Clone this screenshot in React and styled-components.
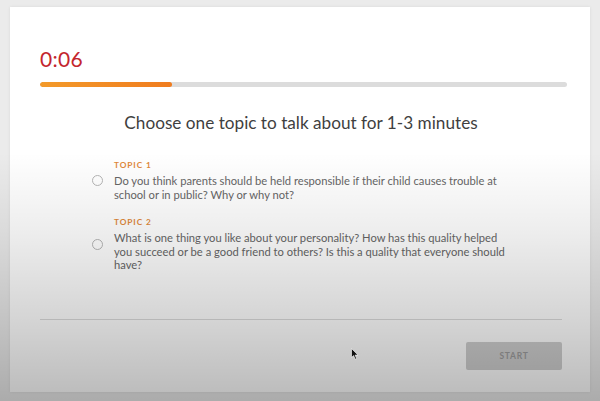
import React from "react";
import styled, { createGlobalStyle } from "styled-components";

const Global = createGlobalStyle`
  html, body { margin: 0; padding: 0; }
  body {
    width: 600px; height: 401px; overflow: hidden;
    background: #ebebeb;
    font-family: Lato, "Open Sans", sans-serif;
  }
`;

const Stage = styled.div`
  position: relative;
  width: 600px;
  height: 401px;
  padding: 7px 10px 9px 10px;
  box-sizing: border-box;
`;

const Card = styled.div`
  background: #fff;
  height: 100%;
  box-sizing: border-box;
  padding: 40px 28px 0 30px;
  box-shadow: 0 0 3px rgba(0,0,0,0.08);
  display: flex;
  flex-direction: column;
`;

const Timer = styled.div`
  color: #c4262e;
  font-size: 21px;
  line-height: 24px;
  letter-spacing: 0.3px;
`;

const Track = styled.div`
  margin-top: 11px;
  height: 5px;
  border-radius: 3px;
  background: #dcdcdc;
  margin-right: -5px;
  overflow: hidden;
`;

const Fill = styled.div`
  height: 100%;
  border-radius: 3px;
  background: linear-gradient(90deg, #f39a2a, #f07c1e);
`;

const Title = styled.h1`
  margin: 25px 0 0;
  text-align: center;
  font-weight: 400;
  font-size: 17.2px;
  line-height: 22px;
  color: #3f3f3f;
`;

const Topics = styled.div`
  margin: 26px 0 0 52px;
  display: flex;
  flex-direction: column;
  gap: 16px;
`;

const Topic = styled.div`
  display: flex;
  align-items: center;
  gap: 11px;
`;

const Radio = styled.span`
  width: 9px;
  height: 9px;
  border: 1px solid #b5b5b5;
  border-radius: 50%;
  flex: none;
  margin-top: ${p => p.$offset}px;
`;

const Body = styled.div`
  display: flex;
  flex-direction: column;
`;

const Label = styled.div`
  color: #e0893a;
  font-size: 8.3px;
  font-weight: 700;
  letter-spacing: 0.9px;
  line-height: 10px;
  margin-bottom: 4px;
`;

const Text = styled.div`
  color: #666;
  font-size: 11.2px;
  line-height: 13.5px;
  width: 392px;
`;

const Divider = styled.div`
  margin-top: auto;
  height: 1px;
  background: #dcdcdc;
`;

const Footer = styled.div`
  display: flex;
  justify-content: flex-end;
  padding: 22px 0 22px;
`;

const StartButton = styled.button`
  width: 96px;
  height: 28px;
  border: none;
  border-radius: 2px;
  background: #cfcfcf;
  color: #9d9d9d;
  font-family: Lato, sans-serif;
  font-weight: 700;
  font-size: 8.5px;
  letter-spacing: 0.7px;
`;

const Shade = styled.div`
  position: absolute;
  inset: 0;
  pointer-events: none;
  background: linear-gradient(180deg,
    rgba(0,0,0,0) 0%,
    rgba(0,0,0,0) 38%,
    rgba(0,0,0,0.07) 58%,
    rgba(0,0,0,0.17) 80%,
    rgba(0,0,0,0.27) 100%);
`;

const Cursor = styled.svg`
  position: absolute;
  left: 351px;
  top: 348px;
  width: 8px;
  height: 12px;
`;

const topics = [
  { label: "TOPIC 1", text: "Do you think parents should be held responsible if their child causes trouble at school or in public? Why or why not?", offset: 0 },
  { label: "TOPIC 2", text: "What is one thing you like about your personality? How has this quality helped you succeed or be a good friend to others? Is this a quality that everyone should have?", offset: 0 },
];

export default function App() {
  return (
    <>
      <Global />
      <Stage>
        <Card>
          <Timer>0:06</Timer>
          <Track><Fill style={{ width: "25%" }} /></Track>
          <Title>Choose one topic to talk about for 1-3 minutes</Title>
          <Topics>
            {topics.map(t => (
              <Topic key={t.label}>
                <Radio $offset={t.offset} />
                <Body>
                  <Label>{t.label}</Label>
                  <Text>{t.text}</Text>
                </Body>
              </Topic>
            ))}
          </Topics>
          <Divider />
          <Footer>
            <StartButton>START</StartButton>
          </Footer>
        </Card>
        <Shade />
        <Cursor viewBox="0 0 8 12">
          <path d="M0.5 0.5 L0.5 9.5 L2.6 7.6 L4.2 11.2 L5.6 10.6 L4.1 7.1 L7 7.1 Z" fill="#111" stroke="#fff" strokeWidth="0.6" />
        </Cursor>
      </Stage>
    </>
  );
}
